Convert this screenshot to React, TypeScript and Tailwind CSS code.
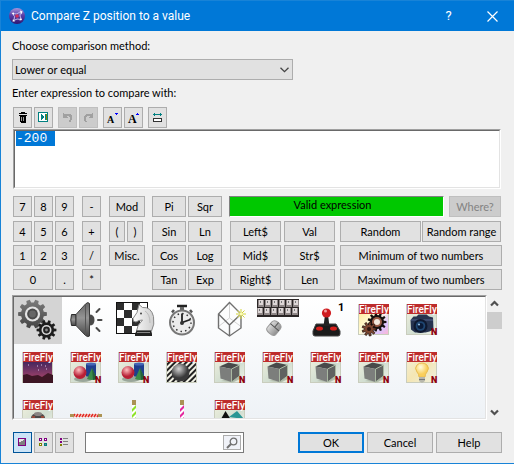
import { useEffect, useRef, type ReactNode } from 'react';

const BTN =
  'flex h-[21px] items-center justify-center border border-[#adadad] bg-[#e1e1e1] whitespace-nowrap text-black hover:border-[#0078d7] hover:bg-[#e5f1fb]';
const OFF = 'flex h-[21px] items-center justify-center border border-[#bfbfbf] bg-[#cccccc] whitespace-nowrap text-[#838383]';
const BEVEL_OUT = 'border border-t-[#a0a0a0] border-r-white border-b-white border-l-[#a0a0a0]';
const BEVEL_IN = 'border border-t-[#696969] border-r-[#e3e3e3] border-b-[#e3e3e3] border-l-[#696969]';

function Key({ label, w = 'w-[19px]' }: { label: string; w?: string }) {
  return (
    <button type="button" className={`${BTN} ${w}`}>
      {label}
    </button>
  );
}

function Tool({ label, off, children }: { label: string; off?: boolean; children: ReactNode }) {
  return (
    <button type="button" aria-label={label} disabled={off} className={`${off ? OFF : BTN} w-[19px]`}>
      <svg width="17" height="19" viewBox="0 0 17 19" shapeRendering="crispEdges">
        {children}
      </svg>
    </button>
  );
}

function gearPath(cx: number, cy: number, inner: number, outer: number, teeth: number) {
  const pts: string[] = [];
  const step = (Math.PI * 2) / teeth;
  for (let i = 0; i < teeth; i++) {
    const a = i * step;
    [
      [-0.32, inner],
      [-0.2, outer],
      [0.2, outer],
      [0.32, inner],
    ].forEach(([f, r]) => {
      pts.push(`${(cx + Math.cos(a + f * step) * r).toFixed(2)} ${(cy + Math.sin(a + f * step) * r).toFixed(2)}`);
    });
  }
  return `M${pts.join('L')}Z`;
}

function Art({ children }: { children: ReactNode }) {
  return (
    <svg width="48" height="48" viewBox="0 0 48 48" className="block" aria-hidden="true">
      {children}
    </svg>
  );
}

function Gears() {
  return (
    <Art>
      <path d={gearPath(18.5, 18, 11.5, 14.5, 10)} fill="url(#gearGrey)" />
      <circle cx="18.5" cy="18" r="7.6" fill="#e4e4e4" />
      <circle cx="18.5" cy="18" r="5.4" fill="#4a4a4a" />
      <circle cx="18.5" cy="18" r="3.4" fill="#666" />
      <path d={gearPath(32.5, 34, 7.6, 10, 10)} fill="#1d1d1d" />
      <circle cx="32.5" cy="34" r="5" fill="#d8d8d8" />
      <circle cx="32.5" cy="34" r="3.4" fill="#222" />
      <circle cx="32.5" cy="34" r="1.4" fill="#888" />
    </Art>
  );
}

function Speaker() {
  return (
    <Art>
      <path d="M9.500 18.500h4.500v11h-4.500q-1.500-5.500 0-11Z" fill="url(#metal)" stroke="#2c2c2c" />
      <path d="M14 18.500L23.500 8q2.500-2.500 4-.5V40q-1.500 1.500-4-.5L14 29.500Z" fill="url(#metal)" stroke="#3a3a3a" />
      <path d="M23.500 8.500v31" stroke="#555" />
      <path d="M27.500 18.500q5 0 5 5.500t-5 5.500Z" fill="#4a4a4a" />
      <path d="M34.500 16l3-3M36 24h3.500M34.500 32l3 3" stroke="#4a4a4a" strokeWidth="2" strokeLinecap="round" />
    </Art>
  );
}

function Chess() {
  const cells = [];
  for (let r = 0; r < 4; r++)
    for (let c = 0; c < 4; c++)
      cells.push(
        <rect key={`${r}${c}`} x={6 + c * 8} y={6 + r * 8} width="8" height="8" fill={(r + c) % 2 ? '#fff' : '#2e2e2e'} />,
      );
  return (
    <Art>
      {cells}
      <rect x="6.500" y="6.500" width="31" height="31" fill="none" stroke="#111" />
      <path
        d="M26.500 35q0-5 6-11-4 0-6.500 2-3.500 0-3-3.500l4-6 2-8 3.500 3q8.500-1 11 9 1.500 8-2 14.500Z"
        fill="url(#pearl)"
        stroke="#888"
      />
      <path d="M35 15q5 3 5 12" fill="none" stroke="#bbb" />
      <circle cx="31" cy="17.500" r="1" fill="#444" />
      <path d="M26.500 34.500h14.500l1 3v2.500H25V38Z" fill="#222" />
      <path d="M27 36.500h13" stroke="#888" />
    </Art>
  );
}

function Watch() {
  return (
    <Art>
      <path d="M19 10h10" stroke="#222" strokeWidth="2.500" />
      <path d="M24 11v4" stroke="#666" strokeWidth="4" />
      <path d="M14 16.500l2-2.500M34 16.500l-2-2.500" stroke="#555" strokeWidth="2.500" />
      <circle cx="24" cy="26.500" r="12" fill="#ececec" stroke="#777" strokeWidth="2" />
      <circle cx="24" cy="26.500" r="9" fill="none" stroke="#333" strokeWidth="1.500" strokeDasharray="1.500 3.200" />
      <path d="M24 17.500v9l8.500-3" fill="none" stroke="#222" strokeWidth="1.800" />
      <circle cx="24" cy="27" r="2" fill="#333" />
    </Art>
  );
}

function Crystal() {
  return (
    <Art>
      <path d="M12.500 30.500L23.500 22 35 30.500M23.500 6.500V22" fill="none" stroke="#d4d4d4" />
      <path
        d="M23.500 6.500L12.500 18v14L23.500 40 35 32V18ZM12.500 18L23.500 29 35 18M23.500 29v11"
        fill="none"
        stroke="#707070"
        strokeWidth="1.400"
      />
      <path d="M35 13v10M30 18h10M31.500 14.500l7 7M38.500 14.500l-7 7" stroke="#d4d43a" />
      <circle cx="35" cy="18" r="1.500" fill="#ffffb0" />
    </Art>
  );
}

function Keyboard() {
  const keys = [];
  for (let r = 0; r < 2; r++)
    for (let c = 0; c < 6; c++) {
      const x = 4 + c * 7 - r * 2 + (r ? 1 : 0);
      const y = 4 + r * 8;
      keys.push(
        <g key={`${r}${c}`}>
          <path d={`M${x} ${y}h6v7h-6Z`} fill="#8f8787" />
          <path d={`M${x + 1} ${y}h4v5h-4Z`} fill="#ddd6d6" />
          <path d={`M${x + 2} ${y + 1}h1v2h-1Z`} fill="#777" />
        </g>,
      );
    }
  return (
    <Art>
      <rect x="3" y="3" width="42" height="18" fill="#2a2525" />
      {keys}
      <g transform="rotate(40 20 32)">
        <path d="M14.500 29q0-4 5.500-4t5.500 4v7q0 3-5.500 3t-5.500-3Z" fill="url(#mouse)" stroke="#999" />
        <path d="M14.500 31h11M20 25v6" stroke="#555" />
      </g>
    </Art>
  );
}

function Joystick() {
  return (
    <Art>
      <path d="M14 28h20l4 7v3q0 2-2 2H13q-2 0-2-2v-3Z" fill="#1b1b1b" stroke="#444" />
      <ellipse cx="17.500" cy="32.500" rx="3.500" ry="2" fill="#d8201c" />
      <ellipse cx="31.500" cy="32.500" rx="3.500" ry="2" fill="#d8201c" />
      <path d="M21.500 30l1.500-11h3l1.500 11Z" fill="#222" />
      <circle cx="24.500" cy="17" r="4.600" fill="#cf1c20" />
      <circle cx="23.500" cy="15" r="1.500" fill="#f0a0a0" />
      <text x="36" y="15" fontSize="11" fontWeight="700" fontFamily="Roboto">
        1
      </text>
    </Art>
  );
}

function FireFly({ n, fill = 'url(#mist)', children }: { n?: boolean; fill?: string; children: ReactNode }) {
  return (
    <Art>
      <rect x="8.500" y="8.500" width="30" height="30" fill={fill} stroke="#c9cdbd" />
      {children}
      <rect x="9" y="8" width="30" height="10" fill="#bd2c2c" />
      <text x="9" y="17" fontSize="10" fontWeight="500" fill="#fff" fontFamily="Roboto">
        FireFly
      </text>
      {n && (
        <text x="33" y="39" fontSize="9" fontWeight="900" fill="#8f0010" fontFamily="Roboto">
          N
        </text>
      )}
    </Art>
  );
}

function FireGears() {
  return (
    <FireFly fill="url(#rainbow)">
      <path d={gearPath(27, 26, 7, 9.5, 11)} fill="#15100e" />
      <circle cx="27" cy="26" r="5" fill="#9a5b45" />
      <circle cx="27" cy="26" r="3" fill="#f3e9dd" />
      <path d={gearPath(19, 33, 4.5, 7, 9)} fill="#7d4630" stroke="#1b0d08" strokeWidth=".7" />
      <circle cx="19" cy="33" r="2" fill="#2a1510" />
    </FireFly>
  );
}

function Camera() {
  return (
    <FireFly n>
      <path d="M12.500 24l3-3.500h3l2-2h8l2.500 2 4 1 .5 12-4 2-4 1H17l-4-3Z" fill="#26334f" />
      <path d="M13 24h22" stroke="#52658f" />
      <circle cx="22.500" cy="30" r="7" fill="#0f1930" />
      <circle cx="22.500" cy="30" r="4.800" fill="#1f4672" />
      <circle cx="22.500" cy="30" r="3" fill="#0b1b38" />
      <circle cx="21" cy="28.500" r="1" fill="#9cc8f0" />
    </FireFly>
  );
}

function Dusk() {
  return (
    <FireFly fill="url(#dusk)">
      <path d="M9 31l4-1 5 2 6-1 4 2 6-4 5 2v8H9Z" fill="#3d1624" />
      <path d="M14 21h1M23 22h1M31 22h1M24 26h1M32 25h1M27 21h1" stroke="#d8c4e8" />
    </FireFly>
  );
}

function Shapes() {
  return (
    <FireFly n>
      <path d="M24 20h10v13H24Z" fill="#1e3f8e" />
      <ellipse cx="29" cy="20" rx="5" ry="1.500" fill="#4567b4" />
      <ellipse cx="21" cy="35" rx="9" ry="3" fill="#9aa69a" />
      <circle cx="18" cy="28.500" r="6.500" fill="url(#redBall)" />
      <path d="M30 24l5 11q-5 2-10 0Z" fill="#3b8c48" />
      <path d="M30 24l5 11-4 1Z" fill="#25613a" />
    </FireFly>
  );
}

function Ball() {
  return (
    <FireFly fill="url(#hatch)">
      <circle cx="22.500" cy="28.500" r="9" fill="url(#greyBall)" />
    </FireFly>
  );
}

function Cube() {
  return (
    <FireFly n>
      <path d="M15 37l12 1.500 8-4v-3Z" fill="#b4beae" />
      <path d="M13.500 22.500l9-4 11 2.500-8 4Z" fill="#484a4a" />
      <path d="M13.500 22.500l12 2.500v13l-11-3.500Z" fill="#7c7e7c" />
      <path d="M25.500 25l8-4v11l-8 6Z" fill="#606260" />
      <path d="M25.500 25v13l8-6V21Z" fill="none" stroke="#a9b8a2" />
    </FireFly>
  );
}

function Bulb() {
  return (
    <FireFly n fill="url(#warm)">
      <path d="M21 33q0-3-2-5-3-4 0-7 2-2 5-2t5 2q3 3 0 7-2 2-2 5Z" fill="url(#glow)" stroke="#e9bd52" />
      <path d="M21 33h6v4l-3 2-3-2Z" fill="#b8b8ac" />
      <path d="M21 35.500h6" stroke="#777" />
    </FireFly>
  );
}

function Figure() {
  return (
    <FireFly>
      <ellipse cx="24" cy="26" rx="7" ry="5" fill="#4c4848" />
      <ellipse cx="24" cy="22" rx="4" ry="2" fill="#8a8482" />
      <path d="M18 25h3M27 25h3" stroke="#af4b37" strokeWidth="1.500" />
    </FireFly>
  );
}

function Rope() {
  return (
    <Art>
      <path d="M9 23.500h30" stroke="#f4d8d0" strokeWidth="3" />
      <path d="M11 25l2-3M14 25l2-3M17 25l2-3M20 25l2-3M23 25l2-3M26 25l2-3M29 25l2-3M32 25l2-3M35 25l2-3" stroke="#e22a25" strokeWidth="1.500" />
      <path d="M8 22h4v3H8ZM36 22h4v3h-4Z" fill="#ac9353" />
    </Art>
  );
}

function Pole({ colour }: { colour: string }) {
  return (
    <Art>
      <rect x="22" y="8" width="4" height="32" fill="#fff" />
      <path d="M22 17l4-4v3l-4 4ZM22 23l4-4v3l-4 4ZM22 29l4-4v3l-4 4Z" fill={colour} />
      <rect x="22" y="8" width="4" height="5" fill="#aa9255" />
    </Art>
  );
}

function Peaks() {
  return (
    <FireFly>
      <path d="M15 27l4.500-8 5 8Z" fill="#111" />
      <path d="M23 25l8-6 7 8Z" fill="#299594" />
    </FireFly>
  );
}

function Defs() {
  return (
    <svg width="0" height="0" className="absolute" aria-hidden="true">
      <defs>
        <linearGradient id="gearGrey" x2="0" y2="1">
          <stop stopColor="#7c7c7c" />
          <stop offset="1" stopColor="#444" />
        </linearGradient>
        <linearGradient id="metal" x2="0" y2="1">
          <stop stopColor="#666" />
          <stop offset=".45" stopColor="#959595" />
          <stop offset="1" stopColor="#444" />
        </linearGradient>
        <linearGradient id="pearl">
          <stop stopColor="#fafafa" />
          <stop offset="1" stopColor="#cfcfcf" />
        </linearGradient>
        <linearGradient id="mouse">
          <stop stopColor="#dcdcdc" />
          <stop offset="1" stopColor="#8e8e8e" />
        </linearGradient>
        <linearGradient id="mist" x2="1" y2="1">
          <stop stopColor="#f3f2df" />
          <stop offset=".6" stopColor="#d0ddd0" />
          <stop offset="1" stopColor="#f0f2e8" />
        </linearGradient>
        <linearGradient id="warm" x2="1" y2="1">
          <stop stopColor="#f3f0dc" />
          <stop offset=".5" stopColor="#f4e6b4" />
          <stop offset="1" stopColor="#eef0e0" />
        </linearGradient>
        <linearGradient id="rainbow" x2="1" y2="1">
          <stop stopColor="#ffe58a" />
          <stop offset=".5" stopColor="#fffbd8" />
          <stop offset=".8" stopColor="#dcc4ff" />
          <stop offset="1" stopColor="#ffb4cf" />
        </linearGradient>
        <linearGradient id="dusk" x2="0" y2="1">
          <stop offset=".3" stopColor="#43265e" />
          <stop offset="1" stopColor="#b7496c" />
        </linearGradient>
        <radialGradient id="redBall" cx=".4" cy=".3">
          <stop stopColor="#ffc0c0" />
          <stop offset="1" stopColor="#b81f35" />
        </radialGradient>
        <radialGradient id="greyBall" cx=".4" cy=".3">
          <stop stopColor="#d4d4d4" />
          <stop offset="1" stopColor="#3a3a3a" />
        </radialGradient>
        <radialGradient id="glow" cx=".4" cy=".3">
          <stop stopColor="#fffce0" />
          <stop offset="1" stopColor="#f9cf5c" />
        </radialGradient>
        <linearGradient id="orb" x2="0" y2="1">
          <stop stopColor="#a795dc" />
          <stop offset=".45" stopColor="#5a3fa6" />
          <stop offset="1" stopColor="#2f1670" />
        </linearGradient>
        <pattern id="hatch" width="4" height="4" patternUnits="userSpaceOnUse" patternTransform="rotate(45)">
          <rect width="4" height="4" fill="#f2f2e6" />
          <rect width="2" height="4" fill="#222" />
        </pattern>
      </defs>
    </svg>
  );
}

const objects: [string, ReactNode][] = [
  ['Special', <Gears />],
  ['Sound', <Speaker />],
  ['Storyboard', <Chess />],
  ['Timer', <Watch />],
  ['Create', <Crystal />],
  ['Mouse and keyboard', <Keyboard />],
  ['Player 1', <Joystick />],
  ['Engine', <FireGears />],
  ['Camera', <Camera />],
  ['Skybox', <Dusk />],
  ['Primitives 1', <Shapes />],
  ['Primitives 2', <Shapes />],
  ['Material', <Ball />],
  ['Cube 1', <Cube />],
  ['Cube 2', <Cube />],
  ['Cube 3', <Cube />],
  ['Cube 4', <Cube />],
  ['Light', <Bulb />],
  ['Figure', <Figure />],
  ['Rope', <Rope />],
  ['Green pole', <Pole colour="#8ee328" />],
  ['Pink pole', <Pole colour="#e32aa0" />],
  ['Terrain', <Peaks />],
];

function Chevron({ up }: { up?: boolean }) {
  return (
    <svg width="15" height="15" viewBox="0 0 15 15" aria-hidden="true">
      <path d={up ? 'M4 10.500L7.500 7l3.500 3.500' : 'M4 5.500L7.500 9 11 5.500'} fill="none" stroke="#505050" strokeWidth="2.200" />
    </svg>
  );
}

export default function App() {
  const box = useRef<HTMLTextAreaElement>(null);
  useEffect(() => {
    box.current?.focus();
    box.current?.select();
  }, []);

  return (
    <div className="border-b border-l border-[#1883d7] bg-[#f0f0f0] font-[Lato,sans-serif] text-[11px] leading-[14px] text-black">
      <Defs />
      <header className="flex h-[31px] items-center border-t border-[#1883d7] bg-[#0078d7] pl-2 text-white">
        <svg width="16" height="16" viewBox="0 0 16 16" aria-hidden="true">
          <circle cx="8" cy="8" r="8" fill="url(#orb)" />
          <path d="M3.500 5.500L8 6l3.500-2.500L11 8l1.500 3.500L8 11l-3 1.500.5-4Z" fill="none" stroke="#c5b8ee" />
          <circle cx="8" cy="8" r="1.800" fill="#d42f58" />
          <path d="M11 2.500l2.500 1-1 3ZM2.500 5l2.500-.5V7ZM4 11l2 2.500H3.500ZM11.500 10l1.500 2-2.500.5Z" fill="#fff" />
        </svg>
        <h1 className="flex-1 pl-[6px] font-[Roboto,sans-serif] text-xs">Compare Z position to a value</h1>
        <button type="button" aria-label="Help" className="flex h-full w-[45px] items-center justify-center font-[Roboto,sans-serif] text-[13px]">
          ?
        </button>
        <button type="button" aria-label="Close" className="flex h-full w-[43px] items-center justify-center">
          <svg width="11" height="11" viewBox="0 0 11 11">
            <path d="M.5.5l10 10M10.500.5l-10 10" stroke="#fff" strokeWidth="1.200" />
          </svg>
        </button>
      </header>

      <main className="pr-3 pb-[10px] pl-3">
        <label htmlFor="method" className="-ml-px block pt-2">
          Choose comparison method:
        </label>
        <div className="relative mt-[6px] -ml-px w-[281px]">
          <select
            id="method"
            className="block h-[21px] w-full appearance-none border border-[#adadad] bg-[#e1e1e1] pl-[2px] outline-none"
          >
            <option>Lower or equal</option>
            <option>Equal</option>
            <option>Greater or equal</option>
          </select>
          <svg width="9" height="6" viewBox="0 0 9 6" className="pointer-events-none absolute top-2 right-1" aria-hidden="true">
            <path d="M.5.700L4.500 4.700 8.500.700" fill="none" stroke="#444" strokeWidth="1.300" />
          </svg>
        </div>
        <label htmlFor="expression" className="-ml-px block pt-[6px]">
          Enter expression to compare with:
        </label>

        <div className="mt-[7px] flex">
          <div className="flex gap-[2px]">
            <Tool label="Delete">
              <path d="M5 5h8v1H5ZM7 4h4v1H7ZM5 7h8v1H5ZM6 8h6v6H6ZM7 14h5v1H7Z" fill="#000" />
              <path d="M7 9h1v4H7ZM9 9h1v4H9Z" fill="#999" />
            </Tool>
            <Tool label="Insert">
              <path d="M3.500 4.500h9v9h-9Z" fill="#fff" stroke="#008080" />
              <path d="M6 6l4 3-4 3ZM10 6h1v6h-1Z" fill="#008080" />
              <path d="M11 6h1v6h-1Z" fill="#808000" />
            </Tool>
          </div>
          <div className="ml-[5px] flex gap-[2px]">
            <Tool label="Undo" off>
              <path d="M4 5v5h5L7 8h3v1h1v2l-1 3h2l1-3V8l-2-2H6Z" fill="#a0a0a0" />
            </Tool>
            <Tool label="Redo" off>
              <path d="M13 5v5H8l2-2H7v1H6v2l1 3H5l-1-3V8l2-2h5Z" fill="#a0a0a0" />
            </Tool>
          </div>
          <div className="ml-[5px] flex gap-[2px]">
            <Tool label="Smaller font">
              <text x="3" y="15" fontSize="10" fontWeight="700" fontFamily="Liberation Serif">
                A
              </text>
              <path d="M11 5h3v1h-3ZM12 6h1v1h-1Z" fill="#0000ff" />
            </Tool>
            <Tool label="Larger font">
              <text x="3" y="15" fontSize="12" fontWeight="700" fontFamily="Liberation Serif">
                A
              </text>
              <path d="M11 6h3v1h-3ZM12 5h1v1h-1Z" fill="#0000ff" />
            </Tool>
          </div>
          <div className="ml-[5px] flex">
            <Tool label="Fit width">
              <path d="M4 6h9v1H4ZM5 5h1v3H5ZM11 5h1v3h-1Z" fill="#008080" />
              <path d="M4.500 10.500h8v3h-8Z" fill="#fff" stroke="#333" />
            </Tool>
          </div>
        </div>

        <div className={`mt-px mr-px ${BEVEL_OUT}`}>
          <textarea
            id="expression"
            ref={box}
            spellCheck={false}
            defaultValue="-200 "
            className={`block h-[58px] w-full resize-none bg-white px-px py-px font-['Liberation_Mono',monospace] text-[13px] leading-[14px] outline-none selection:bg-[#0078d7] selection:text-white ${BEVEL_IN}`}
          />
        </div>

        <section aria-label="Expression keys" className="mt-[7px] flex flex-col gap-[3px]">
          <div className="mb-px flex pr-px">
            <div className="flex gap-[2px]">
              <Key label="7" />
              <Key label="8" />
              <Key label="9" />
            </div>
            <div className="ml-2 flex">
              <Key label="-" />
            </div>
            <div className="ml-2 flex w-9">
              <Key label="Mod" w="w-9" />
            </div>
            <div className="ml-[7px] flex gap-[2px]">
              <Key label="Pi" w="w-[34px]" />
              <Key label="Sqr" w="w-[34px]" />
            </div>
            <div className="ml-[7px] flex flex-1 gap-[5px]">
              <output className="h-[21px] flex-1 border border-t-[#808080] border-r-white border-b-white border-l-[#808080] bg-[#00c800] pt-px pr-2 text-center">
                Valid expression
              </output>
              <button type="button" disabled className={`${OFF} w-[52px]`}>
                Where?
              </button>
            </div>
          </div>
          <div className="flex pr-px">
            <div className="flex gap-[2px]">
              <Key label="4" />
              <Key label="5" />
              <Key label="6" />
            </div>
            <div className="ml-2 flex">
              <Key label="+" />
            </div>
            <div className="ml-2 flex w-9 gap-[2px]">
              <Key label="(" w="w-4" />
              <Key label=")" w="w-4" />
            </div>
            <div className="ml-[7px] flex gap-[2px]">
              <Key label="Sin" w="w-[34px]" />
              <Key label="Ln" w="w-[34px]" />
            </div>
            <div className="ml-2 flex flex-1">
              <Key label="Left$" w="w-[51px]" />
              <Key label="Val" w="ml-[3px] w-[51px]" />
              <Key label="Random" w="ml-[5px] flex-1" />
              <Key label="Random range" w="ml-px w-[79px]" />
            </div>
          </div>
          <div className="flex">
            <div className="flex gap-[2px]">
              <Key label="1" />
              <Key label="2" />
              <Key label="3" />
            </div>
            <div className="ml-2 flex">
              <Key label="/" />
            </div>
            <div className="ml-2 flex w-9">
              <Key label="Misc." w="w-9" />
            </div>
            <div className="ml-[7px] flex gap-[2px]">
              <Key label="Cos" w="w-[34px]" />
              <Key label="Log" w="w-[34px]" />
            </div>
            <div className="ml-2 flex flex-1">
              <Key label="Mid$" w="w-[51px]" />
              <Key label="Str$" w="ml-[3px] w-[51px]" />
              <Key label="Minimum of two numbers" w="ml-[5px] flex-1" />
            </div>
          </div>
          <div className="flex">
            <div className="flex gap-[2px]">
              <Key label="0" w="w-10" />
              <Key label="." />
            </div>
            <div className="ml-2 flex">
              <Key label="*" />
            </div>
            <div className="ml-2 w-9" />
            <div className="ml-[7px] flex gap-[2px]">
              <Key label="Tan" w="w-[34px]" />
              <Key label="Exp" w="w-[34px]" />
            </div>
            <div className="ml-2 flex flex-1">
              <Key label="Right$" w="w-[51px]" />
              <Key label="Len" w="ml-[3px] w-[51px]" />
              <Key label="Maximum of two numbers" w="ml-[5px] flex-1" />
            </div>
          </div>
        </section>

        <div className="mt-[5px] -ml-px flex h-[125px]">
          <div className={`flex-1 ${BEVEL_OUT}`}>
            <div className={`h-full overflow-hidden bg-linear-to-b from-white to-[#eef2f6] ${BEVEL_IN}`}>
              <div className="-mt-px flex flex-wrap">
                {objects.map(([name, art], i) => (
                  <button key={name} type="button" aria-label={name} className={i === 0 ? 'bg-[#d4d4d4]' : ''}>
                    {art}
                  </button>
                ))}
              </div>
            </div>
          </div>
          <div className="flex w-[15px] flex-col items-center">
            <Chevron up />
            <div className="mt-[2px] mb-auto h-[17px] w-full bg-[#cdcdcd]" />
            <Chevron />
          </div>
        </div>

        <footer className="mt-3 flex">
          <div className="flex gap-[2px]">
            <button
              type="button"
              aria-label="Large icons"
              aria-pressed="true"
              className="flex h-[21px] w-[19px] items-center justify-center border border-[#005499] bg-[#cce4f7]"
            >
              <svg width="17" height="19" viewBox="0 0 17 19" shapeRendering="crispEdges">
                <path d="M4.500 5.500h7v7h-7Z" fill="#808080" stroke="#800080" />
                <path d="M5 6h5v1H9v1H7v1H5Z" fill="#e8e8e8" />
              </svg>
            </button>
            <Tool label="Small icons">
              <path d="M4.500 5.500h2v2h-2ZM9.500 5.500h2v2h-2Z" fill="#fff" stroke="#800080" />
              <path d="M4.500 10.500h2v2h-2Z" fill="#fff" stroke="#808000" />
              <path d="M9.500 10.500h2v2h-2Z" fill="#808080" stroke="#008080" />
            </Tool>
            <Tool label="List">
              <path d="M4 5h2v2H4ZM4 8h2v2H4Z" fill="#800080" />
              <path d="M4 11h2v2H4Z" fill="#808000" />
              <path d="M7 5h5v1H7ZM7 8h5v1H7ZM7 11h5v1H7Z" fill="#808080" />
            </Tool>
          </div>
          <form role="search" className="ml-[11px] flex h-[21px] w-[159px] border border-[#7a7a7a] bg-white p-[2px]">
            <input aria-label="Search objects" className="min-w-0 flex-1 px-1 outline-none" />
            <button
              type="button"
              aria-label="Search"
              className="flex w-[18px] items-center justify-center border border-[#adadad] bg-[#f0f2f8]"
            >
              <svg width="12" height="12" viewBox="0 0 12 12" fill="none" stroke="#707070">
                <circle cx="7.500" cy="4.500" r="3.300" strokeWidth="1.300" />
                <path d="M5 7L1 11" strokeWidth="2" />
              </svg>
            </button>
          </form>
          <div className="ml-auto flex gap-[3px]">
            <button type="button" className="h-[21px] w-[66px] border-2 border-[#0078d7] bg-[#e1e1e1]">
              OK
            </button>
            <Key label="Cancel" w="w-[66px]" />
            <Key label="Help" w="w-[66px]" />
          </div>
        </footer>
      </main>
    </div>
  );
}
